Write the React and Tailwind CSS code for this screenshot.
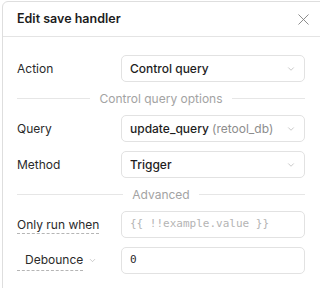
import { ChevronDown, X } from 'lucide-react';

const Select = ({ children }) => (
  <div className="flex-1 h-[27px] flex items-center justify-between pl-[8px] pr-[8px] border border-[#e2e2e2] rounded-[5px] bg-white text-[12px] font-medium text-[#1e1e1e]">
    <span className="truncate">{children}</span>
    <ChevronDown size={10} strokeWidth={1.5} className="text-[#a8a8a8] shrink-0" />
  </div>
);

const Row = ({ label, children }) => (
  <div className="flex items-center h-[27px]">
    <div className="w-[104px] shrink-0 text-[12px] text-[#2a2a2a]">{label}</div>
    {children}
  </div>
);

const Divider = ({ title }) => (
  <div className="flex items-center h-[15px] gap-[9px]">
    <div className="flex-1 h-px bg-[#e6e6e6]" />
    <span className="text-[12px] text-[#a3a3a3] leading-none">{title}</span>
    <div className="flex-1 h-px bg-[#e6e6e6]" />
  </div>
);

const mono = { fontFamily: '"DejaVu Sans Mono", monospace' };

const App = () => {
  return (
    <div
      className="w-[320px] h-[288px] overflow-hidden bg-white pl-[2px] pt-[1px]"
      style={{ fontFamily: 'Inter, "Noto Sans", sans-serif' }}
    >
      <div className="w-[330px] h-[300px] border border-[#dedede] rounded-tl-[6px] bg-white">
        {/* Header */}
        <div className="h-[35px] flex items-center justify-between pl-[14px] pr-[18px] border-b border-[#e4e4e4]">
          <h1 className="text-[12.5px] font-semibold text-[#1c1c1c]">Edit save handler</h1>
          <X size={19} strokeWidth={1.1} className="text-[#7c7c7c]" />
        </div>

        {/* Body */}
        <div className="pl-[14px] pr-[26px] pt-[18px] flex flex-col gap-[9px]">
          <Row label="Action">
            <Select>Control query</Select>
          </Row>
          <Divider title="Control query options" />
          <Row label="Query">
            <Select>
              update_query <span className="text-[#8d8d8d] font-normal">(retool_db)</span>
            </Select>
          </Row>
          <Row label="Method">
            <Select>Trigger</Select>
          </Row>
          <Divider title="Advanced" />
          <Row
            label={
              <span className="border-b border-dashed border-[#b5b5b5] pb-[1px]">Only run when</span>
            }
          >
            <div className="flex-1 h-[27px] flex items-center px-[8px] border border-[#e2e2e2] rounded-[5px] text-[11px] text-[#b4b4b4]" style={mono}>
              {'{{ !!example.value }}'}
            </div>
          </Row>
          <Row
            label={
              <span className="inline-flex items-center">
                <span className="pl-[8px] border-b border-dashed border-[#b5b5b5] pb-[1px]">Debounce</span>
                <ChevronDown size={9} strokeWidth={1.5} className="text-[#a8a8a8] ml-[5px]" />
              </span>
            }
          >
            <div className="flex-1 h-[27px] flex items-center px-[8px] border border-[#e2e2e2] rounded-[5px] text-[11px] text-[#2a2a2a]" style={mono}>
              0
            </div>
          </Row>
        </div>
      </div>
    </div>
  );
};

export default App;
